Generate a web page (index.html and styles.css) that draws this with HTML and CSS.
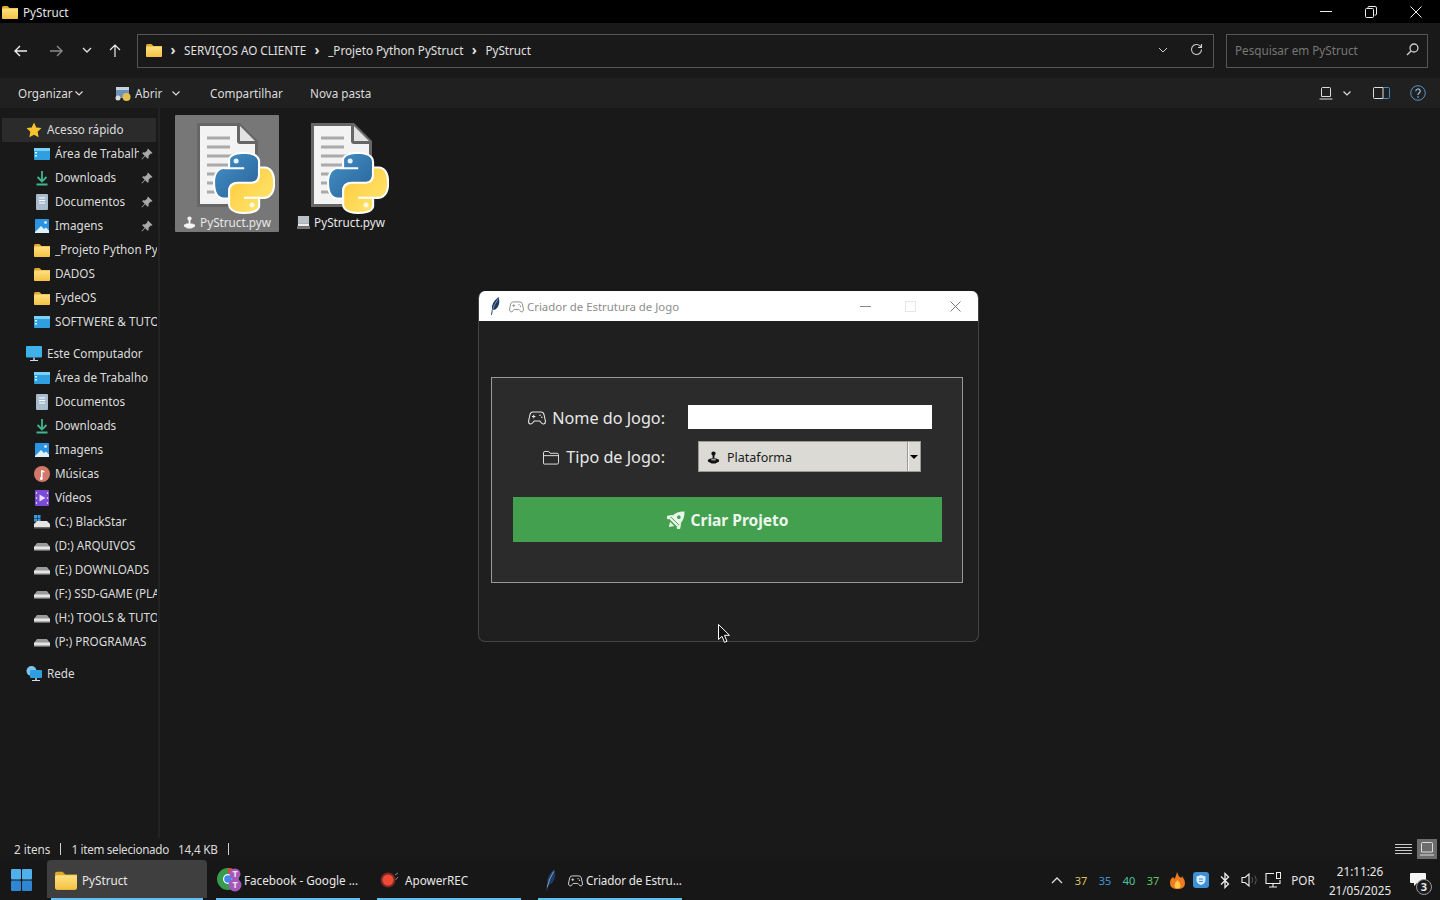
FILE: index.html
```html
<!DOCTYPE html>
<html lang="pt-BR">
<head>
  <meta charset="UTF-8">
  <title>PyStruct</title>
  <link rel="stylesheet" href="styles.css">
</head>
<body>
  <svg class="sprites" width="0" height="0">
    <defs>
      <linearGradient id="fold" x1="0" y1="0" x2="0" y2="1"><stop offset="0" stop-color="#ffe082"/><stop offset="1" stop-color="#f5c242"/></linearGradient>
      <linearGradient id="blue" x1="0" y1="0" x2="1" y2="1"><stop offset="0" stop-color="#4392c9"/><stop offset="1" stop-color="#2a6296"/></linearGradient>
      <linearGradient id="yel" x1="0" y1="0" x2="1" y2="1"><stop offset="0" stop-color="#ffe873"/><stop offset="1" stop-color="#fdc93a"/></linearGradient>
      <symbol id="folder" viewBox="0 0 16 16"><path d="M0 3.500q0-1.500 1.500-1.500h4l2 2H16v9.500q0 1.500-1.500 1.500h-13Q0 15 0 13.500z" fill="#e0a92e"/><path d="M0 6q0-1.500 1.500-1.500H16v9q0 1.500-1.500 1.500h-13Q0 15 0 13.500z" fill="url(#fold)"/></symbol>
      <symbol id="desktop" viewBox="0 0 16 14"><rect width="16" height="12" y="1" rx="1" fill="#2f9fe0"/><rect width="16" height="3" y="1" fill="#7fd0f5"/><rect x="1" y="5" width="2" height="1.500" fill="#dff"/><rect x="1" y="8" width="2" height="1.500" fill="#dff"/></symbol>
      <symbol id="download" viewBox="0 0 16 16"><path d="M8 1v10M3.500 7 8 11.500 12.500 7M2.500 14.500h11" fill="none" stroke="#3fb68f" stroke-width="1.800"/></symbol>
      <symbol id="doc" viewBox="0 0 16 16"><rect x="2" width="12" height="16" rx="1" fill="#a9bccd"/><path d="M5 4h6M5 6.500h6M5 9h6" stroke="#fff" stroke-width="1.200"/></symbol>
      <symbol id="image" viewBox="0 0 16 16"><rect x="1" y="1" width="14" height="14" rx="1" fill="#2b93e3"/><path d="M1 14l6-6 3 3 2-1.500 3 3V15H1z" fill="#dff1fb"/><circle cx="11.500" cy="4.500" r="1.300" fill="#fff"/></symbol>
      <symbol id="music" viewBox="0 0 16 16"><circle cx="8" cy="8" r="8" fill="#d2786a"/><path d="M7 11V4l3.500 1v1.500L8.500 6v5.500a1.500 1.500 0 1 1-1.500-.5z" fill="#fff"/></symbol>
      <symbol id="video" viewBox="0 0 16 16"><rect x="1" width="14" height="16" rx="1" fill="#7b4bd8"/><path d="M5.500 4.500 11.500 8l-6 3.500z" fill="#e8dcff"/><path d="M2.500 2v2M2.500 7v2M2.500 12v2M13.500 2v2M13.500 7v2M13.500 12v2" stroke="#d6c6ff" stroke-width="1.200"/></symbol>
      <symbol id="drive" viewBox="0 0 16 10"><path d="M3 2h10l3 4v3.500H0V6z" fill="#9a9a9a"/><rect y="5.500" width="16" height="3.500" rx=".5" fill="#e4e4e4"/><rect x="0" y="8.500" width="16" height="1" fill="#777"/></symbol>
      <symbol id="drive-c" viewBox="0 0 16 14"><rect width="3" height="3" fill="#3c9be0"/><rect x="3.500" width="3" height="3" fill="#3c9be0"/><rect y="3.500" width="3" height="3" fill="#3c9be0"/><rect x="3.500" y="3.500" width="3" height="3" fill="#3c9be0"/><path d="M3 6h10l3 3v4H0V9z" fill="#e4e4e4"/><rect y="12" width="16" height="1.500" fill="#666"/></symbol>
      <symbol id="monitor" viewBox="0 0 16 16"><rect width="16" height="11.500" rx="1" fill="#3fb0e8"/><rect x="7" y="11.500" width="2" height="2.500" fill="#9ab"/><rect x="4" y="14" width="8" height="1" fill="#cde"/></symbol>
      <symbol id="network" viewBox="0 0 16 16"><circle cx="5.500" cy="5" r="5" fill="#7cc4ea"/><rect x="4" y="4" width="12" height="8" rx="1" fill="#2f9fe0"/><rect x="9" y="12" width="2" height="2" fill="#9ab"/><rect x="6" y="14" width="8" height="1" fill="#cde"/></symbol>
      <symbol id="star" viewBox="0 0 16 16"><path d="M8 .5l2.300 4.900 5.200.7-3.800 3.700.9 5.400L8 12.700l-4.600 2.500.9-5.400L.5 6.100l5.200-.7z" fill="#f7c32e"/></symbol>
      <symbol id="pin" viewBox="0 0 12 12"><path d="M7 .5l4.500 4.500-1 .7-.8-.2L7.500 8l.2 2-1 .8-2.500-2.500L1 11.500l-.5-.5 3.200-3.300L1.200 5.300 2 4.300l2 .2 2.500-2.200-.2-.8z" fill="#a8a8a8"/></symbol>
      <symbol id="joystick" viewBox="0 0 14 14"><circle cx="7" cy="2.800" r="2.300" fill="currentColor"/><rect x="6" y="4" width="2" height="4.500" fill="currentColor"/><path d="M1 9.500 4 8h6l3 1.500v1.800L9 13.500H5l-4-2.200z" fill="currentColor"/><ellipse cx="7" cy="9.300" rx="2.800" ry="1" fill="#fff" opacity=".55"/></symbol>
      <symbol id="gamepad" viewBox="0 0 18 15"><path d="M5 2h8q2.400 0 3 2.500l1.300 6q.5 3-1.500 3.500-1.500.3-2.800-1.500L11.800 11H6.200L5 12.500Q3.700 14.300 2.200 14 .2 13.500.7 10.500L2 4.500Q2.600 2 5 2z" fill="none" stroke="currentColor" stroke-width="1.100"/><path d="M4 6.500h3.400M5.700 4.800v3.400" stroke="currentColor" stroke-width="1"/><circle cx="12" cy="5.300" r=".8" fill="currentColor"/><circle cx="13.800" cy="7.200" r=".8" fill="currentColor"/></symbol>
      <symbol id="feather" viewBox="0 0 12 18"><path d="M2 18 3 12Q2 6 9.500 0 11.500 6 8.500 10.500 6.500 13 4 13L2.800 18z" fill="#1f3a66"/><path d="M3 15Q4.500 8 9 2" fill="none" stroke="#9db8d8" stroke-width=".7"/></symbol>
      <symbol id="python" viewBox="-4 -4 118 118">
        <g stroke="#fff" stroke-width="8" paint-order="stroke" stroke-linejoin="round">
          <path d="M54.900 0C26.800 0 28.600 12.200 28.600 12.200v12.600h26.800v3.800H17.900S0 26.600 0 55c0 28.400 15.600 27.400 15.600 27.400h9.300V69.200s-.5-15.600 15.400-15.600h26.500s14.900.2 14.900-14.400V15S84 0 54.900 0z" fill="url(#blue)"/>
          <path transform="rotate(180 55.200 55)" d="M54.900 0C26.800 0 28.600 12.200 28.600 12.200v12.600h26.800v3.800H17.900S0 26.600 0 55c0 28.400 15.600 27.400 15.600 27.400h9.300V69.200s-.5-15.600 15.400-15.600h26.500s14.900.2 14.900-14.400V15S84 0 54.900 0z" fill="url(#yel)"/>
        </g>
        <circle cx="40" cy="13.300" r="4.800" fill="#e8f2fa"/><circle cx="70.400" cy="96.700" r="4.800" fill="#fff8dc"/>
      </symbol>
      <symbol id="pyfile" viewBox="0 0 104 100">
        <path d="M22 8h43l18 18v66H22z" fill="#666"/>
        <path d="M25 11h37v15q0 3 3 3h15v60H25z" fill="#f3f3f3"/>
        <path d="M65 11v15h15z" fill="#e2e2e2"/>
        <path d="M32 23h23M32 32h23M32 41h38M32 50h30M32 59h14M32 68h8M32 77h8" stroke="#aaa" stroke-width="3"/>
        <use href="#python" x="38" y="36" width="62" height="64"/>
      </symbol>
    </defs>
  </svg>

  <div class="explorer">
    <header class="titlebar">
      <svg class="ico-16"><use href="#folder"/></svg>
      <span class="titlebar-name">PyStruct</span>
      <div class="window-btns">
        <svg width="12" height="12" viewBox="0 0 12 12"><path d="M0 5.500h12" stroke="#eee"/></svg>
        <svg width="12" height="12" viewBox="0 0 12 12"><path d="M3 2.500V1.500q0-1 1-1h6q1.500 0 1.500 1.500v6q0 1-1 1H9.500M.5 3.500q0-1 1-1h6q1 0 1 1v7q0 1-1 1h-6q-1 0-1-1z" fill="none" stroke="#eee"/></svg>
        <svg width="12" height="12" viewBox="0 0 12 12"><path d="M.5.500l11 11M11.500.5l-11 11" stroke="#eee"/></svg>
      </div>
    </header>

    <div class="address-row">
      <div class="nav-btns">
        <svg width="14" height="12" viewBox="0 0 14 12"><path d="M13 6H1.500M6 1 1 6l5 5" fill="none" stroke="#eee" stroke-width="1.400"/></svg>
        <svg width="14" height="12" viewBox="0 0 14 12"><path d="M1 6h11.500M8 1l5 5-5 5" fill="none" stroke="#8a8a8a" stroke-width="1.400"/></svg>
        <svg width="10" height="7" viewBox="0 0 10 7"><path d="M1 1l4 4 4-4" fill="none" stroke="#ddd" stroke-width="1.400"/></svg>
        <svg width="12" height="13" viewBox="0 0 12 13"><path d="M6 13V1.500M1 6l5-5 5 5" fill="none" stroke="#eee" stroke-width="1.200"/></svg>
      </div>
      <div class="address-box">
        <svg class="ico-16"><use href="#folder"/></svg>
        <span class="crumb-sep">›</span><span>SERVIÇOS AO CLIENTE</span>
        <span class="crumb-sep">›</span><span>_Projeto Python PyStruct</span>
        <span class="crumb-sep">›</span><span>PyStruct</span>
        <svg class="address-chev" width="10" height="6" viewBox="0 0 10 6"><path d="M1 1l4 4 4-4" fill="none" stroke="#ccc"/></svg>
        <svg class="address-refresh" width="13" height="13" viewBox="0 0 13 13"><path d="M11.500 6.500a5 5 0 1 1-1.500-3.600L11.500 4.500M11.500 1v3.500H8" fill="none" stroke="#ccc" stroke-width="1.100"/></svg>
      </div>
      <div class="search-box">
        <span>Pesquisar em PyStruct</span>
        <svg width="13" height="13" viewBox="0 0 13 13"><circle cx="8" cy="5" r="4" fill="none" stroke="#ccc" stroke-width="1.300"/><path d="M5 8 1 12" stroke="#ccc" stroke-width="1.500"/></svg>
      </div>
    </div>

    <div class="toolbar">
      <span class="tool tool-org">Organizar<svg class="chev" width="8" height="5" viewBox="0 0 8 5"><path d="M.5.500 4 4 7.500.5" fill="none" stroke="#ddd" stroke-width="1.200"/></svg></span>
      <span class="tool tool-open">
        <svg width="16" height="17" viewBox="0 0 16 17"><rect x="1" y="2" width="13" height="11" fill="#6f93b8"/><rect x="1" y="2" width="13" height="3" fill="#c7d3df"/><circle cx="11.500" cy="12" r="4" fill="#e6c14f"/><circle cx="3" cy="13" r="2.500" fill="#ddd"/></svg>
        Abrir<svg class="chev chev-open" width="8" height="5" viewBox="0 0 8 5"><path d="M.5.500 4 4 7.500.5" fill="none" stroke="#ddd" stroke-width="1.200"/></svg>
      </span>
      <span class="tool tool-share">Compartilhar</span>
      <span class="tool">Nova pasta</span>
      <div class="tool-right">
        <svg width="14" height="13" viewBox="0 0 14 13"><path d="M2.500 9.500V1.500q0-1 1-1h7q1 0 1 1v8zM.5 12h13" fill="none" stroke="#ddd"/></svg>
        <svg class="chev-view" width="8" height="5" viewBox="0 0 8 5"><path d="M.5.500 4 4 7.500.5" fill="none" stroke="#ddd" stroke-width="1.200"/></svg>
        <svg class="pane-ico" width="17" height="12" viewBox="0 0 17 12"><path d="M10 .5H1.500q-1 0-1 1v9q0 1 1 1H10z" fill="none" stroke="#ddd"/><path d="M10 .5h5.500q1 0 1 1v9q0 1-1 1H10" fill="none" stroke="#3f8fd0"/></svg>
        <svg class="help-ico" width="16" height="16" viewBox="0 0 16 16"><circle cx="8" cy="8" r="7.300" fill="none" stroke="#5b95c8"/><path d="M5.800 6.200a2.200 2.200 0 1 1 3.300 1.900Q8 8.800 8 10" fill="none" stroke="#9cc4e4" stroke-width="1.200"/><circle cx="8" cy="12" r=".8" fill="#9cc4e4"/></svg>
      </div>
    </div>

    <div class="main">
      <nav class="sidebar">
        <div class="nav-head selected"><svg class="ico-16"><use href="#star"/></svg><span class="head-label">Acesso rápido</span></div>
        <div class="nav-row"><svg class="ico-16"><use href="#desktop"/></svg><span class="nav-label">Área de Trabalho</span><svg class="pin"><use href="#pin"/></svg></div>
        <div class="nav-row"><svg class="ico-16"><use href="#download"/></svg><span class="nav-label">Downloads</span><svg class="pin"><use href="#pin"/></svg></div>
        <div class="nav-row"><svg class="ico-16"><use href="#doc"/></svg><span class="nav-label">Documentos</span><svg class="pin"><use href="#pin"/></svg></div>
        <div class="nav-row"><svg class="ico-16"><use href="#image"/></svg><span class="nav-label">Imagens</span><svg class="pin"><use href="#pin"/></svg></div>
        <div class="nav-row"><svg class="ico-16"><use href="#folder"/></svg><span class="nav-label">_Projeto Python PyStruct</span></div>
        <div class="nav-row"><svg class="ico-16"><use href="#folder"/></svg><span class="nav-label">DADOS</span></div>
        <div class="nav-row"><svg class="ico-16"><use href="#folder"/></svg><span class="nav-label">FydeOS</span></div>
        <div class="nav-row"><svg class="ico-16"><use href="#desktop"/></svg><span class="nav-label">SOFTWERE &amp; TUTORIAIS</span></div>

        <div class="nav-head group"><svg class="ico-16"><use href="#monitor"/></svg><span class="head-label">Este Computador</span></div>
        <div class="nav-row"><svg class="ico-16"><use href="#desktop"/></svg><span class="nav-label">Área de Trabalho</span></div>
        <div class="nav-row"><svg class="ico-16"><use href="#doc"/></svg><span class="nav-label">Documentos</span></div>
        <div class="nav-row"><svg class="ico-16"><use href="#download"/></svg><span class="nav-label">Downloads</span></div>
        <div class="nav-row"><svg class="ico-16"><use href="#image"/></svg><span class="nav-label">Imagens</span></div>
        <div class="nav-row"><svg class="ico-16"><use href="#music"/></svg><span class="nav-label">Músicas</span></div>
        <div class="nav-row"><svg class="ico-16"><use href="#video"/></svg><span class="nav-label">Vídeos</span></div>
        <div class="nav-row"><svg class="ico-16"><use href="#drive-c"/></svg><span class="nav-label">(C:) BlackStar</span></div>
        <div class="nav-row"><svg class="ico-drive"><use href="#drive"/></svg><span class="nav-label">(D:) ARQUIVOS</span></div>
        <div class="nav-row"><svg class="ico-drive"><use href="#drive"/></svg><span class="nav-label">(E:) DOWNLOADS</span></div>
        <div class="nav-row"><svg class="ico-drive"><use href="#drive"/></svg><span class="nav-label">(F:) SSD-GAME (PLAY)</span></div>
        <div class="nav-row"><svg class="ico-drive"><use href="#drive"/></svg><span class="nav-label">(H:) TOOLS &amp; TUTORIAIS</span></div>
        <div class="nav-row"><svg class="ico-drive"><use href="#drive"/></svg><span class="nav-label">(P:) PROGRAMAS</span></div>

        <div class="nav-head group"><svg class="ico-16"><use href="#network"/></svg><span class="head-label">Rede</span></div>
      </nav>

      <section class="files">
        <div class="file selected-file">
          <svg class="file-ico"><use href="#pyfile"/></svg>
          <div class="file-name"><svg class="mini"><use href="#joystick"/></svg>PyStruct.pyw</div>
        </div>
        <div class="file">
          <svg class="file-ico"><use href="#pyfile"/></svg>
          <div class="file-name"><svg class="mini" viewBox="0 0 14 14"><rect x="1" width="12" height="8" fill="#b9c0c8"/><rect x="1" y="8" width="12" height="3" fill="#eee"/><rect y="11" width="14" height="3" fill="#777"/></svg>PyStruct.pyw</div>
        </div>
      </section>
    </div>

    <footer class="statusbar">
      <span>2 itens</span><i class="status-sep"></i><span class="status-sel">1 item selecionado</span><span class="status-size">14,4 KB</span><i class="status-sep"></i>
      <div class="view-btns">
        <svg width="17" height="11" viewBox="0 0 17 11"><path d="M0 .5h17M0 3.500h17M0 6.500h17M0 9.500h17" stroke="#ccc"/></svg>
        <span class="view-active"><svg width="14" height="14" viewBox="0 0 14 14"><path d="M1.500 10V1.500q0-1 1-1h9q1 0 1 1V10zM0 13h14" fill="none" stroke="#ddd"/></svg></span>
      </div>
    </footer>

    <div class="taskbar">
      <div class="start">
        <svg width="21" height="22" viewBox="0 0 21 22"><g fill="#4fb0ec"><rect width="10" height="10.500" rx="1"/><rect x="11" width="10" height="10.500" rx="1"/></g><g fill="#2f86d2"><rect y="11.500" width="10" height="10.500" rx="1"/><rect x="11" y="11.500" width="10" height="10.500" rx="1"/></g></svg>
      </div>
      <div class="task task-active"><svg class="ico-22"><use href="#folder"/></svg><span>PyStruct</span></div>
      <div class="task task-fb">
        <svg width="28" height="28" viewBox="0 0 28 28"><circle cx="12" cy="13" r="11" fill="#3a9b4c"/><path d="M12 2a11 11 0 0 1 9.500 5.500H12z" fill="#d9483b"/><circle cx="12" cy="13" r="5" fill="#fff"/><circle cx="12" cy="13" r="3.800" fill="#4285f4"/><circle cx="19" cy="8" r="5.500" fill="#a458b8"/><circle cx="19" cy="19" r="6.500" fill="#a458b8"/><text x="19" y="10.500" class="tab-t">T</text><text x="19" y="22" class="tab-t">T</text></svg>
        <span>Facebook - Google ...</span>
      </div>
      <div class="task task-rec">
        <svg width="19" height="16" viewBox="0 0 19 16"><circle cx="8" cy="8" r="7.500" fill="#7c2a22"/><circle cx="8" cy="8" r="5.500" fill="#ef4a38"/><path d="M15 3l3-2M15.500 8l2.500-3" stroke="#888"/></svg>
        <span>ApowerREC</span>
      </div>
      <div class="task task-tk">
        <svg width="13" height="22" viewBox="0 0 12 18" preserveAspectRatio="none"><use href="#feather"/></svg>
        <svg class="ico-pad"><use href="#gamepad"/></svg>
        <span class="task-tk-name">Criador de Estru...</span>
      </div>

      <div class="tray">
        <span class="tray-cell"><svg width="12" height="7" viewBox="0 0 12 7"><path d="M1 6l5-5 5 5" fill="none" stroke="#ddd" stroke-width="1.300"/></svg></span>
        <span class="tray-cell temp-a">37</span>
        <span class="tray-cell temp-b">35</span>
        <span class="tray-cell temp-c">40</span>
        <span class="tray-cell temp-d">37</span>
        <span class="tray-cell"><svg width="15" height="17" viewBox="0 0 15 17"><path d="M7 0q1 4 4 6 1-1 1-2 3 4 3 7 0 6-7.500 6T0 11q0-4 3-6 1 1 1.500 2Q6 5 7 0z" fill="#ef7a20"/><path d="M7.500 8q3 3 3 5.500a3 3 0 0 1-6 0Q4.500 11 7.500 8z" fill="#ffc94a"/></svg></span>
        <span class="tray-cell"><svg width="16" height="16" viewBox="0 0 16 16"><rect width="16" height="16" rx="3" fill="#3d8fd6"/><path d="M8 3l4.500 1.500V8Q12.500 11.500 8 13 3.500 11.500 3.500 8V4.500z" fill="#d8ecfa"/><path d="M6 7h4M6 9.500h4" stroke="#3d8fd6"/></svg></span>
        <span class="tray-cell"><svg width="10" height="17" viewBox="0 0 10 17"><path d="M1 4.500l7.500 7.500L5 15.500v-14L8.500 5 1 12.500" fill="none" stroke="#f0f0f0" stroke-width="1.300"/></svg></span>
        <span class="tray-cell"><svg width="17" height="14" viewBox="0 0 17 14"><path d="M1 4.500h3L8 1v12L4 9.500H1z" fill="none" stroke="#eee" stroke-width="1.100"/><path d="M11 4q1.500 3 0 6M14 2.500q2.500 4.500 0 9" fill="none" stroke="#555"/></svg></span>
        <span class="tray-cell"><svg width="17" height="16" viewBox="0 0 17 16"><path d="M9 1.500H1v10h14V8M8 11.500v3M4 15h8" fill="none" stroke="#eee" stroke-width="1.100"/><rect x="11.500" y=".5" width="4" height="6" fill="none" stroke="#eee"/></svg></span>
        <span class="tray-lang">POR</span>
        <div class="clock"><div>21:11:26</div><div>21/05/2025</div></div>
        <div class="notif">
          <svg width="16" height="13" viewBox="0 0 16 13"><path d="M0 1q0-1 1-1h14q1 0 1 1v8q0 1-1 1H7l-3 3v-3H1q-1 0-1-1z" fill="#f4f4f4"/></svg>
          <span class="notif-badge">3</span>
        </div>
      </div>
    </div>
  </div>

  <div class="dialog">
    <div class="dialog-title">
      <svg class="dlg-feather"><use href="#feather"/></svg>
      <svg class="ico-pad"><use href="#gamepad"/></svg>
      <span class="dialog-name">Criador de Estrutura de Jogo</span>
      <div class="dialog-btns">
        <svg width="11" height="11" viewBox="0 0 11 11"><path d="M0 5.500h11" stroke="#888"/></svg>
        <svg width="11" height="11" viewBox="0 0 11 11"><rect x=".5" y=".5" width="10" height="10" fill="none" stroke="#e6e6e6"/></svg>
        <svg width="11" height="11" viewBox="0 0 11 11"><path d="M.5.500l10 10M10.500.5l-10 10" stroke="#777"/></svg>
      </div>
    </div>
    <div class="dialog-body">
      <div class="panel">
        <div class="form">
          <label class="field-label"><svg class="label-ico"><use href="#gamepad"/></svg>Nome do Jogo:</label>
          <input class="entry" type="text">
          <label class="field-label"><svg class="label-ico" viewBox="0 0 17 16"><path d="M.5 3q0-1.500 1.500-1.500h4l1.500 2H15q1.500 0 1.500 1.500v8.500q0 1.500-1.500 1.500H2Q.5 15.500.5 14zM.5 6h16" fill="none" stroke="currentColor"/></svg>Tipo de Jogo:</label>
          <div class="combo">
            <div class="combo-value"><svg class="mini"><use href="#joystick"/></svg>Plataforma</div>
            <div class="combo-arrow"><i></i></div>
          </div>
        </div>
        <button class="create-btn">
          <svg width="18" height="18" viewBox="0 0 18 18"><g transform="rotate(45 9 9)"><path d="M9-3Q14.500 2 14.500 8v5h-11V8Q3.500 2 9-3z" fill="#e8f5e9"/><path d="M3.500 7 0 12v4l3.500-2.500zM14.500 7 18 12v4l-3.500-2.500z" fill="#e8f5e9"/><path d="M6 14.500h6L9 19z" fill="#e8f5e9"/><circle cx="9" cy="5" r="1.800" fill="#43a04f"/><path d="M3.500 10.500h11" stroke="#43a04f" stroke-width=".9"/></g></svg>
          Criar Projeto
        </button>
      </div>
    </div>
  </div>

  <svg class="cursor" width="13" height="19" viewBox="0 0 13 19"><path d="M.5.500v15l3.500-3.200 2.500 6 2.500-1-2.500-6h5z" fill="#111" stroke="#fff"/></svg>
</body>
</html>
```

FILE: styles.css
```css
* {
  box-sizing: border-box;
}

html, body {
  margin: 0;
  height: 100%;
  overflow: hidden;
}

body {
  font-family: "Noto Sans", "Open Sans", sans-serif;
  font-size: 11.7px;
  color: #dcdcdc;
  background: #191919;
}

.sprites {
  position: absolute;
}

svg {
  display: block;
  flex: none;
}

.ico-16 {
  width: 16px;
  height: 16px;
}

.explorer {
  display: flex;
  flex-direction: column;
  height: 900px;
}

/* title bar */
.titlebar {
  display: flex;
  align-items: center;
  height: 23px;
  padding-left: 2px;
  background: #000;
  color: #e6e6e6;
}

.titlebar-name {
  margin-left: 5px;
}

.window-btns {
  display: flex;
  gap: 33px;
  margin-left: auto;
  padding-right: 18px;
  align-items: center;
}

/* address row */
.address-row {
  display: flex;
  align-items: center;
  height: 55px;
  background: #191919;
}

.nav-btns {
  display: flex;
  align-items: center;
  width: 137px;
  padding-left: 14px;
}

.nav-btns svg:nth-child(2) {
  margin-left: 21px;
}

.nav-btns svg:nth-child(3) {
  margin-left: 19px;
}

.nav-btns svg:nth-child(4) {
  margin-left: 17px;
}

.address-box {
  display: flex;
  align-items: center;
  width: 1077px;
  height: 34px;
  padding: 0 0 2px 8px;
  border: 1px solid #555;
  color: #e0e0e0;
}

.crumb-sep {
  width: 22px;
  text-align: center;
  font-weight: 700;
  font-size: 14px;
  line-height: 14px;
}

.address-chev {
  margin-left: auto;
}

.address-refresh {
  margin-left: 22px;
  margin-right: 10px;
}

.search-box {
  display: flex;
  align-items: center;
  justify-content: space-between;
  width: 202px;
  height: 34px;
  margin-left: 12px;
  padding: 0 8px 2px;
  border: 1px solid #555;
  color: #777;
}

/* toolbar */
.toolbar {
  display: flex;
  align-items: center;
  height: 30px;
  padding-left: 18px;
  background: #202020;
  color: #dcdcdc;
}

.tool {
  display: flex;
  align-items: center;
}

.chev {
  margin-left: 2px;
}

.tool-org {
  width: 97px;
}

.tool-open {
  width: 95px;
  gap: 4px;
}

.chev-open {
  margin-left: 6px;
}

.tool-share {
  width: 100px;
}

.tool-right {
  display: flex;
  align-items: center;
  margin-left: auto;
  padding-right: 14px;
}

.chev-view {
  margin-left: 10px;
}

.pane-ico {
  margin-left: 22px;
}

.help-ico {
  margin-left: 20px;
}

/* main area */
.main {
  display: flex;
  height: 730px;
  background: #191919;
}

.sidebar {
  width: 160px;
  padding-top: 10px;
  padding-right: 1px;
  border-right: 2px solid #232323;
}

.nav-head,
.nav-row {
  display: flex;
  align-items: center;
  height: 24px;
  white-space: nowrap;
}

.nav-head {
  padding-left: 26px;
  gap: 5px;
}

.nav-head.selected {
  margin: 0 1px 0 2px;
  padding-left: 24px;
  background: #2b2b2b;
}

.nav-head.group {
  margin-top: 8px;
}

.nav-row {
  padding-left: 34px;
}

.head-label {
  padding-bottom: 2px;
}

.nav-label {
  flex: 1;
  min-width: 0;
  margin-left: 5px;
  padding-bottom: 2px;
  overflow: hidden;
}

.pin {
  width: 12px;
  height: 12px;
  margin: 0 4px 0 2px;
}

.ico-drive {
  width: 16px;
  height: 10px;
}

.files {
  display: flex;
  align-items: flex-start;
  gap: 10px;
  padding: 7px 0 0 15px;
}

.file {
  width: 104px;
  height: 117px;
}

.selected-file {
  background: #777;
  border-radius: 1px;
}

.file-ico {
  width: 104px;
  height: 100px;
}

.file-name {
  display: flex;
  justify-content: center;
  align-items: center;
  gap: 4px;
  height: 14px;
  color: #e8e8e8;
}

.mini {
  width: 13px;
  height: 13px;
  color: #f2f2f2;
}

/* status bar */
.statusbar {
  display: flex;
  align-items: center;
  height: 22px;
  padding-left: 14px;
  background: #191919;
  color: #dcdcdc;
}

.status-sep {
  width: 1px;
  height: 12px;
  margin: 0 10px;
  background: #d0d0d0;
}

.status-sel {
  letter-spacing: -.3px;
}

.status-size {
  margin-left: 9px;
  letter-spacing: -.2px;
}

.view-btns {
  display: flex;
  align-items: center;
  gap: 5px;
  margin-left: auto;
  padding-right: 3px;
}

.view-active {
  display: flex;
  align-items: center;
  justify-content: center;
  width: 20px;
  height: 20px;
  background: #6c6c6c;
}

/* taskbar */
.taskbar {
  display: flex;
  align-items: stretch;
  height: 40px;
  background: #171717;
  color: #e8e8e8;
  white-space: nowrap;
}

.start {
  display: flex;
  align-items: center;
  width: 47px;
  padding-left: 11px;
}

.task {
  position: relative;
  display: flex;
  align-items: center;
  width: 144px;
  margin-right: 17px;
}

.task::after {
  content: "";
  position: absolute;
  left: 0;
  right: 0;
  bottom: 0;
  height: 2px;
  background: #62c0ee;
}

.task-active {
  width: 160px;
  margin-right: 9px;
  padding-left: 8px;
  gap: 5px;
  background: linear-gradient(#3f3f3f, #3f3f3f) top / 100% 38px no-repeat;
  border-radius: 4px 4px 0 0;
}

.task-active::after {
  left: 4px;
  right: 4px;
}

.ico-22 {
  width: 22px;
  height: 22px;
}

.task-fb {
  gap: 0;
}

.tab-t {
  font-size: 9px;
  font-weight: 700;
  fill: #f0e0f5;
  text-anchor: middle;
}

.task-rec {
  padding-left: 3px;
  gap: 6px;
}

.task-tk {
  padding-left: 6px;
  gap: 3px;
}

.task-tk-name {
  letter-spacing: -.15px;
}

.ico-pad {
  width: 15px;
  height: 13px;
  color: #e0e0e0;
}

.task-tk .ico-pad {
  margin-left: 8px;
}

.tray {
  display: flex;
  align-items: center;
  margin-left: auto;
}

.tray-cell {
  display: flex;
  align-items: center;
  justify-content: center;
  width: 24px;
  height: 100%;
  font-size: 11px;
}

.temp-a { color: #dcc65a; }
.temp-b { color: #3e95d6; }
.temp-c { color: #44c99a; }
.temp-d { color: #5fc85f; }

.tray-lang {
  width: 36px;
  text-align: center;
}

.clock {
  width: 78px;
  padding-top: 1px;
  text-align: center;
  line-height: 19px;
}

.notif {
  position: relative;
  display: flex;
  justify-content: center;
  width: 41px;
  height: 100%;
  padding: 13px 12px 0 8px;
}

.notif-badge {
  position: absolute;
  left: 17px;
  top: 19px;
  width: 16px;
  height: 16px;
  border: 1px solid #999;
  border-radius: 50%;
  background: #1c1c1c;
  font-size: 11px;
  font-weight: 700;
  line-height: 14px;
  text-align: center;
}

/* tk dialog */
.dialog {
  position: absolute;
  left: 478px;
  top: 291px;
  width: 501px;
  height: 351px;
  border: 1px solid #444;
  border-top: 0;
  border-radius: 7px;
  background: #1f1f1f;
  overflow: hidden;
}

.dialog-title {
  display: flex;
  align-items: center;
  height: 30px;
  padding-left: 10px;
  background: #fff;
  color: #8c8c8c;
}

.dlg-feather {
  width: 12px;
  height: 18px;
}

.dialog-title .ico-pad {
  margin-left: 8px;
  color: #888;
}

.dialog-name {
  margin-left: 3px;
  font-size: 11.4px;
}

.dialog-btns {
  display: flex;
  align-items: center;
  gap: 34px;
  margin-left: auto;
  padding-right: 17px;
}

.dialog-body {
  padding: 56px 15px 0 12px;
}

.panel {
  height: 206px;
  padding: 27px 20px 0 21px;
  background: #2b2b2b;
  border: 1px solid #999;
}

.form {
  display: grid;
  grid-template-columns: 152px 244px;
  column-gap: 23px;
  row-gap: 12px;
  align-items: center;
  justify-items: end;
}

.field-label {
  display: flex;
  align-items: center;
  gap: 6px;
  padding-top: 1px;
  font-size: 16.2px;
  color: #e8e8e8;
}

.label-ico {
  width: 18px;
  height: 15px;
  color: #e8e8e8;
}

.entry {
  width: 244px;
  height: 24px;
  padding: 0;
  border: 0;
  background: #fff;
}

.combo {
  display: flex;
  justify-self: start;
  width: 223px;
  height: 31px;
  margin-left: 10px;
  border: 1px solid #999;
  background: #dbdad5;
  color: #1a1a1a;
}

.combo-value {
  display: flex;
  align-items: center;
  flex: 1;
  gap: 7px;
  padding: 1px 0 0 8px;
  font-size: 12.5px;
}

.combo-value .mini {
  color: #111;
}

.combo-arrow {
  display: flex;
  align-items: center;
  justify-content: center;
  width: 13px;
  border-left: 1px solid #999;
  box-shadow: inset 1px 0 #f4f4f4;
}

.combo-arrow i {
  border-left: 4px solid transparent;
  border-right: 4px solid transparent;
  border-top: 4px solid #000;
}

.create-btn {
  display: flex;
  align-items: center;
  justify-content: center;
  gap: 6px;
  width: 429px;
  height: 45px;
  margin-top: 25px;
  border: 0;
  background: #43a04f;
  color: #eef7ee;
  font-family: inherit;
  font-size: 15.5px;
  font-weight: 700;
}

.cursor {
  position: absolute;
  left: 718px;
  top: 624px;
}
```
